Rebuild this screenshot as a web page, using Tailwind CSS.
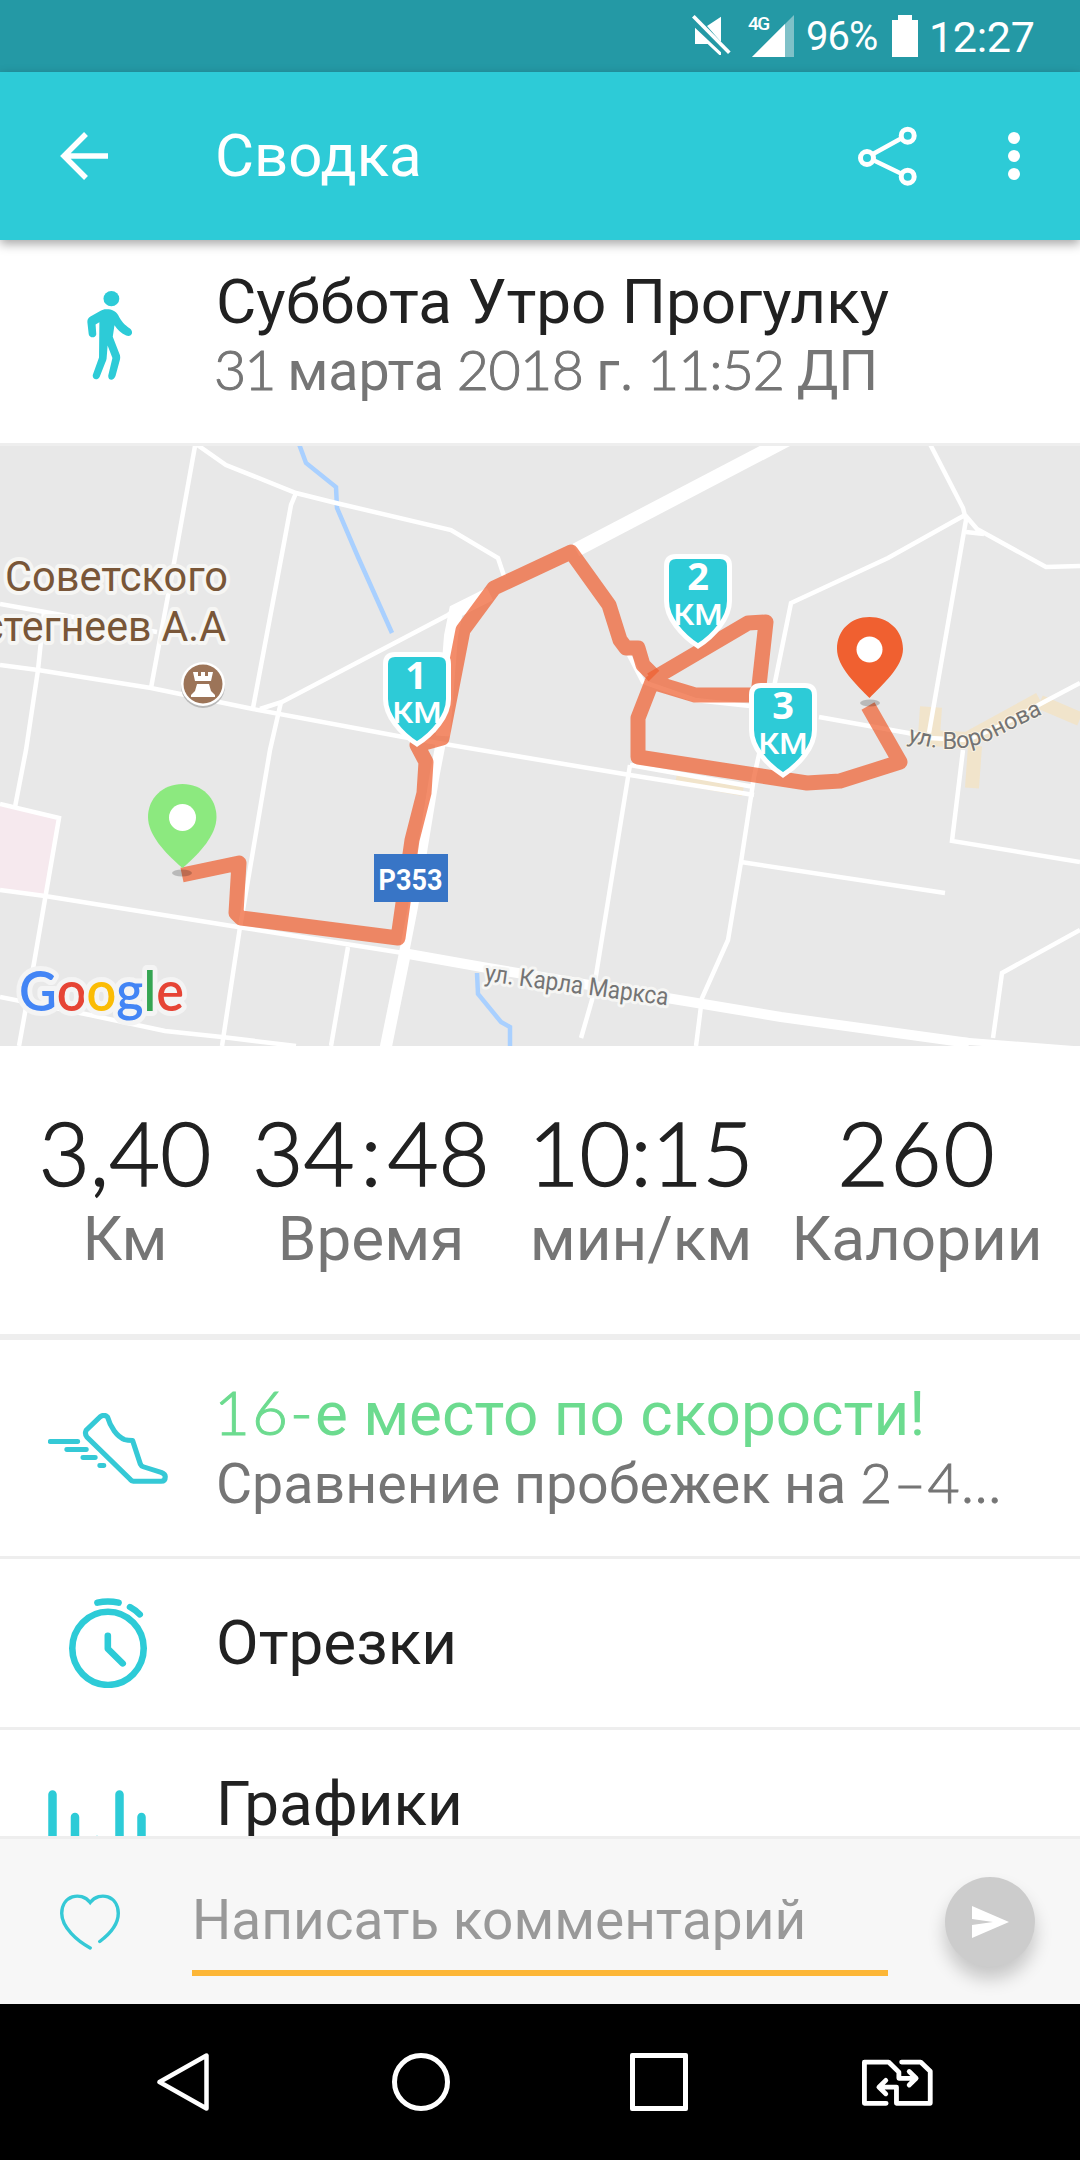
<!DOCTYPE html>
<html lang="ru">
<head>
    <meta charset="UTF-8">
    <meta name="viewport" content="width=device-width, initial-scale=1.0">
    <title>Сводка</title>
    <script src="https://cdn.jsdelivr.net/npm/@tailwindcss/browser@4"></script>
</head>
<body class="bg-white font-[Roboto,sans-serif] text-[#212121]">
    <div class="w-[1080px] h-[2160px] flex flex-col overflow-hidden">
        <!-- Status bar -->
        <div class="h-[72px] shrink-0 bg-[#2499a5] text-white flex items-start pl-[692px]">
            <svg class="mt-[15px] w-[39px] h-10" viewBox="96 45 117 120" preserveAspectRatio="none">
                <path d="M141 78L183 50V126ZM105 83L183 157V165H178L143 132H105Z" fill="#fff"/>
                <path d="M100 49L208 158" stroke="#fff" stroke-width="11"/>
            </svg>
            <div class="relative ml-[21px] mt-[15px] w-[42px] h-[42px]">
                <svg class="w-[42px] h-[42px]" viewBox="0 0 42 42">
                    <path d="M0 42L42 0V42Z" fill="#7fc1c8"/>
                    <path d="M0 42L33 9V42Z" fill="#fff"/>
                </svg>
                <span class="absolute -left-1 -top-[1px] text-[19px] leading-5 font-medium tracking-[-1.5px]">4G</span>
            </div>
            <span class="ml-[12px] mt-[13px] w-[76px] text-[40px] leading-[48px] tracking-[-1px]">96%</span>
            <svg class="ml-[10px] mt-[15px] w-[26px] h-[42px]" viewBox="0 0 26 42">
                <path d="M6 0H20V5H26V42H0V5H6Z" fill="#fff"/>
            </svg>
            <span class="ml-[11px] mt-[13px] text-[43px] leading-[48px] tracking-[-0.3px]">12:27</span>
        </div>

        <!-- App bar -->
        <div class="relative z-10 h-[168px] shrink-0 bg-[#2dcbd7] text-white flex items-center pl-[60px] pr-[60px] shadow-[0_4px_10px_rgba(0,0,0,0.35)]">
            <svg class="w-12 h-12" viewBox="0 0 48 48" fill="none" stroke="#fff" stroke-width="5.5">
                <path d="M48 24H4M26 2L4 24L26 46"/>
            </svg>
            <h1 class="ml-[107px] text-[60px] leading-[72px]">Сводка</h1>
            <svg class="ml-auto w-[60px] h-[60px]" viewBox="0 0 60 60" fill="none" stroke="#fff">
                <path d="M15 28L44 12M15 34L44 48" stroke-width="4.5"/>
                <circle cx="9" cy="32" r="6.5" stroke-width="5"/>
                <circle cx="49.700" cy="9.700" r="6.500" stroke-width="5"/>
                <circle cx="49.700" cy="50.700" r="6.500" stroke-width="5"/>
            </svg>
            <svg class="ml-[90px] w-3 h-12" viewBox="0 0 12 48" fill="#fff">
                <circle cx="6" cy="6" r="6"/>
                <circle cx="6" cy="24" r="6"/>
                <circle cx="6" cy="42" r="6"/>
            </svg>
        </div>

        <!-- Activity header -->
        <div class="h-[206px] shrink-0 flex border-b-[3px] border-[#eeeeee]">
            <div class="w-[216px] pl-[87px] pt-[51px]">
                <svg class="w-[45px] h-[89px]" viewBox="252 692 131 268" preserveAspectRatio="none" fill="#2dcbd7">
                    <circle cx="323" cy="715" r="23"/>
                    <path d="M303 747C320 745 335 750 343 765C352 784 362 794 377 805C391 818 379 832 366 826C350 818 340 808 332 795L327 830L346 880Q350 888 348 898L335 948C330 964 312 962 314 946L326 894L312 856L309 896Q308 902 305 908L289 950C282 964 266 958 269 944L287 892L288 786L277 793L279 822C278 834 260 835 257 822L253 785Q253 774 262 769L293 751Z"/>
                </svg>
            </div>
            <div class="pt-[26px]">
                <h2 class="text-[62px] leading-[71px] whitespace-nowrap">Суббота Утро Прогулку</h2>
                <p class="text-[55.500px] leading-[70px] whitespace-nowrap text-[#757575] [word-spacing:-1px]"><span class="-ml-[2px] font-[Lato] font-light leading-none tracking-[-2px] [-webkit-text-stroke:1px_#757575]">31</span> марта <span class="font-[Lato] font-light leading-none tracking-[-0.5px] [-webkit-text-stroke:1px_#757575]">2018</span> г. <span class="font-[Lato] font-light leading-none tracking-[-1px] [-webkit-text-stroke:1px_#757575]">11:52</span> ДП</p>
            </div>
        </div>

        <!-- Map -->
        <svg class="w-[1080px] h-[600px] shrink-0 bg-[#e8e8e8]" viewBox="0 0 1080 600" fill="none">
            <path d="M0 360L58 373L45 449L0 442Z" fill="#f6e9ee"/>
            <g stroke="#f1e4cb">
                <path d="M931 261L929 290" stroke-width="22"/>
                <path d="M929 292L967 294L1040 254" stroke-width="16"/>
                <path d="M1040 256L1080 273" stroke-width="14"/>
                <path d="M975 300L972 342" stroke-width="14"/>
                <path d="M676 333L743 345" stroke-width="10"/>
            </g>
            <g stroke="#a9d0ff" stroke-width="4.500">
                <path d="M299 -2L306 17L336 41L337 62L358 111L392 187"/>
                <path d="M477 527L478 548L501 576L510 581V600"/>
            </g>
            <!-- Roads -->
            <g stroke="#fff" stroke-width="4.500">
                <path d="M195 0L174 117L151 242"/>
                <path d="M196 -2L226 19L296 47L336 57L451 84L498 112L504 130"/>
                <path d="M296 47L291 59L284 97L253 262"/>
                <path d="M0 158L45 166L157 186"/>
                <path d="M0 219L38 224L151 242L253 263L403 291L540 314L630 329L754 349"/>
                <path d="M44 166L38 224L26 304L15 361"/>
                <path d="M260 263L282 256L448 169L482 147"/>
                <path d="M281 256L270 304L243 464L240 481L222 600"/>
                <path d="M0 444L45 450L238 481L403 507"/>
                <path d="M0 358L59 372L34 517L19 600"/>
                <path d="M0 551L90 569L165 585L222 591L296 600"/>
                <path d="M348 501L331 600"/>
                <path d="M930 -2L963 62L966 74L929 287"/>
                <path d="M965 69L888 112L791 157L774 241L754 331L741 416L728 494L702 552L696 600"/>
                <path d="M965 69L977 83L1046 121L1080 120M966 86L984 88"/>
                <path d="M819 271L908 287L929 292L967 294L1000 280L1044 256L1080 237"/>
                <path d="M629 209L643 236L695 254L750 260"/>
                <path d="M630 319L592 554L581 592M630 319L754 341"/>
                <path d="M741 416L945 447"/>
                <path d="M963 304L952 395L1080 416"/>
                <path d="M1080 484L1002 527L993 592"/>
                <path d="M404 507L413 461L424 394L435 327L441 296" stroke-width="10"/>
                <path d="M443 290L451 190L456 165L490 148" stroke-width="14"/>
                <path d="M384 610L405 507" stroke-width="12"/>
                <path d="M576 104L794 -10" stroke-width="14"/>
                <path d="M403 507L482 521L667 552L781 571L969 597" stroke-width="10"/>
                <path d="M950 594L1080 604" stroke-width="7"/>
            </g>
            <!-- Map labels -->
            <g font-family="Roboto" paint-order="stroke" stroke="#f6f6f4" stroke-width="8" stroke-linejoin="round">
                <text x="5" y="145" font-size="43" fill="#795638" textLength="223" lengthAdjust="spacingAndGlyphs">Советского</text>
                <text x="-18" y="195" font-size="43" fill="#795638" textLength="244" lengthAdjust="spacingAndGlyphs">стегнеев А.А</text>
                <text transform="translate(484 535) rotate(7.600)" font-size="25" fill="#747474" stroke-width="6" textLength="185" lengthAdjust="spacingAndGlyphs">ул. Карла Маркса</text>
                <path id="voronova" d="M907 295C930 303 962 308 992 293S1030 274 1060 260" stroke="none"/>
                <text font-size="23.500" fill="#747474" stroke-width="2" stroke="#faf3e6"><textPath href="#voronova">ул. Воронова</textPath></text>
            </g>
            <g>
                <circle cx="203" cy="240" r="22" fill="#b9b9b9"/>
                <circle cx="203" cy="238" r="22" fill="#fff"/>
                <circle cx="203" cy="238" r="19.500" fill="#9c7458"/>
                <path d="M193 226H198V230H201V226H205V230H208V226H213L211 235H195ZM197 238H209L211 245L215 249V251H191V249L195 245Z" fill="#fff"/>
            </g>
            <!-- Track -->
            <g stroke="#ee6030" stroke-opacity="0.72" stroke-width="15" stroke-linejoin="round">
                <path d="M182 429L239 417L236 467L241 472L398 492L412 394L424 347L426 316L417 299L442 292L463 184L494 142L571 106L609 159L620 194L626 202H638L643 219L654 230"/>
                <path d="M651 234L748 177L766 176L758 249H695L652 236L638 272V311L807 337L840 335L900 316L868 260"/>
            </g>
            <path d="M374 408H448V456H374Z" fill="#3875c6"/>
            <text x="378.500" y="443.500" font-family="Roboto" font-weight="700" font-size="30" fill="#fff" textLength="64" lengthAdjust="spacingAndGlyphs">P353</text>
            <!-- Pins -->
            <ellipse cx="182" cy="427" rx="10" ry="3.500" fill="#000" fill-opacity="0.2"/>
            <path d="M182.500 422C165 407 148 389 148 371C148 352 163 338 182.500 338C202 338 216.500 352 216.500 371C216.500 389 200 407 182.500 422Z" fill="#8ce97f"/>
            <circle cx="182.500" cy="371.500" r="13.500" fill="#fff"/>
            <ellipse cx="870" cy="257" rx="10" ry="3.500" fill="#000" fill-opacity="0.2"/>
            <path d="M869.500 252C857 239 837 221 837 203C837 184 851 171 869.500 171C888 171 903 184 903 203C903 221 882 239 869.500 252Z" fill="#f06030"/>
            <circle cx="869.500" cy="203.500" r="13" fill="#fff"/>
            <!-- Kilometre badges -->
            <g fill="#fff" text-anchor="middle" font-family="Roboto" font-size="29">
                <g transform="translate(383 206)">
                    <path d="M12 2.500H56Q65.500 2.500 65.500 12V47C65.500 64 50 82 34 92C18 82 2.500 64 2.500 47V12Q2.500 2.500 12 2.500Z" fill="#2dcbd7" stroke="#fff" stroke-width="5"/>
                    <text x="33" y="37" font-family="Open Sans" font-weight="700" font-size="38">1</text>
                    <text x="34" y="71" font-weight="500" textLength="49" lengthAdjust="spacingAndGlyphs">КМ</text>
                </g>
                <g transform="translate(664 108)">
                    <path d="M12 2.500H56Q65.500 2.500 65.500 12V47C65.500 64 50 82 34 92C18 82 2.500 64 2.500 47V12Q2.500 2.500 12 2.500Z" fill="#2dcbd7" stroke="#fff" stroke-width="5"/>
                    <text x="34" y="36" font-family="Open Sans" font-weight="700" font-size="38">2</text>
                    <text x="34" y="71" font-weight="500" textLength="49" lengthAdjust="spacingAndGlyphs">КМ</text>
                </g>
                <g transform="translate(749 237)">
                    <path d="M12 2.500H56Q65.500 2.500 65.500 12V47C65.500 64 50 82 34 92C18 82 2.500 64 2.500 47V12Q2.500 2.500 12 2.500Z" fill="#2dcbd7" stroke="#fff" stroke-width="5"/>
                    <text x="34" y="36" font-family="Open Sans" font-weight="700" font-size="38">3</text>
                    <text x="34" y="71" font-weight="500" textLength="49" lengthAdjust="spacingAndGlyphs">КМ</text>
                </g>
            </g>
            <text x="19" y="565" font-family="Lato" font-weight="600" font-size="55" textLength="165" lengthAdjust="spacingAndGlyphs" paint-order="stroke" stroke="#f4f4f4" stroke-width="10" stroke-linejoin="round"><tspan fill="#4385f5">G</tspan><tspan fill="#e64435">o</tspan><tspan fill="#fbbc05">o</tspan><tspan fill="#4385f5">g</tspan><tspan fill="#35a552">l</tspan><tspan fill="#e64435">e</tspan></text>
        </svg>

        <!-- Stats -->
        <div class="h-[294px] shrink-0 flex pt-[53px] border-b-[6px] border-[#eeeeee] text-center whitespace-nowrap">
            <div class="w-[250px]">
                <div class="font-[Lato] font-light text-[88px] leading-[106px] [-webkit-text-stroke:1.5px_#212121]">3,40</div>
                <div class="text-[62px] leading-[68px] text-[#757575]">Км</div>
            </div>
            <div class="w-[242px]">
                <div class="font-[Lato] font-light text-[88px] leading-[106px] [-webkit-text-stroke:1.5px_#212121]">34<span class="px-[6px]">:</span>48</div>
                <div class="text-[62px] leading-[68px] text-[#757575]">Время</div>
            </div>
            <div class="w-[298px]">
                <div class="font-[Lato] font-light text-[88px] leading-[106px] [-webkit-text-stroke:1.5px_#212121]">10:15</div>
                <div class="text-[62px] leading-[68px] text-[#757575]">мин/км</div>
            </div>
            <div class="w-[254px]">
                <div class="font-[Lato] font-light text-[88px] leading-[106px] tracking-[2px] [-webkit-text-stroke:1.5px_#212121]">260</div>
                <div class="text-[62px] leading-[68px] text-[#757575]">Калории</div>
            </div>
        </div>

        <!-- Pace ranking -->
        <div class="h-[219px] shrink-0 flex border-b-[3px] border-[#eeeeee]">
            <div class="w-[216px] pl-12 pt-[73px]">
                <svg class="w-[120px] h-[71px]" viewBox="139 158 349 214" preserveAspectRatio="none" fill="none" stroke="#35c9d6" stroke-width="15" stroke-linecap="round" stroke-linejoin="round">
                    <path d="M146 244H225M194 268H250M241 292H276M290 316H301"/>
                    <path d="M250 210L290 170Q302 160 312 170C320 200 340 230 362 238Q370 240 385 241L408 313Q410 318 416 320L468 337Q480 342 480 350Q480 364 468 364H388Q382 363 378 358L252 230Q245 220 250 210Z"/>
                </svg>
            </div>
            <div class="pt-[38px] whitespace-nowrap">
                <h3 class="text-[62px] leading-[72px] text-[#6cdb8f]"><span class="-ml-[2px] font-[Lato] font-light leading-none tracking-[2px] [-webkit-text-stroke:1px_#6cdb8f]">16-</span>е место по скорости!</h3>
                <p class="text-[55.500px] leading-[69px] text-[#757575]">Сравнение пробежек на <span class="font-[Lato] font-light leading-none tracking-[1.5px] [-webkit-text-stroke:1px_#757575]">2–4…</span></p>
            </div>
        </div>

        <!-- Splits -->
        <div class="h-[171px] shrink-0 flex items-center border-b-[3px] border-[#eeeeee]">
            <div class="w-[216px] pl-[69px]">
                <svg class="w-[78px] h-[90px]" viewBox="200 716 225 268" preserveAspectRatio="none" fill="none" stroke="#2dcbd7" stroke-width="19" stroke-linecap="round" stroke-linejoin="round">
                    <ellipse cx="312.500" cy="866" rx="103" ry="109"/>
                    <path d="M312 828V867L355 911M282 730Q312 723 343 730M376 743Q392 752 404 765"/>
                </svg>
            </div>
            <h3 class="text-[62px] leading-[72px]">Отрезки</h3>
        </div>

        <!-- Graphs -->
        <div class="h-[106px] shrink-0 flex overflow-hidden">
            <div class="w-[216px] pl-12 pt-[60px]">
                <svg class="w-[98px] h-[90px]" viewBox="0 0 98 90" fill="none" stroke="#2dcbd7" stroke-width="8.500" stroke-linecap="round">
                    <path d="M4.500 4.500V85M27 27V85M49 50V85M71.500 4.500V85M93.500 27V85"/>
                </svg>
            </div>
            <h3 class="pt-[38px] text-[62px] leading-[72px]">Графики</h3>
        </div>

        <!-- Comment bar -->
        <div class="h-[168px] shrink-0 flex bg-[#f7f7f7] border-t-[3px] border-[#eeeeee] pl-[60px]">
            <svg class="mt-[55px] w-[60px] h-[56px]" viewBox="174 523 175 165" preserveAspectRatio="none" fill="none" stroke="#35c9d6" stroke-width="10" stroke-linecap="round">
                <path d="M262 682C225 662 179 622 179 580C179 529 234 513 262 548C290 513 344 529 344 580C344 612 318 642 290 663"/>
            </svg>
            <div class="ml-[72px] mt-[39px] w-[696px] h-[98px] border-b-[6px] border-[#fcb637] text-[55px] leading-[84px] text-[#999999]">Написать комментарий</div>
            <div class="ml-[57px] mt-[38px] w-[90px] h-[90px] rounded-full bg-[#cccccc] flex items-center justify-center shadow-[0_12px_18px_rgba(0,0,0,0.2)]">
                <svg class="w-[37px] h-8" viewBox="0 0 37 32"><path d="M0 0L37 16L0 32V19L21 16L0 13Z" fill="#fff"/></svg>
            </div>
        </div>

        <!-- Navigation bar -->
        <div class="h-[156px] shrink-0 bg-black flex items-center pl-[157px]">
            <svg class="w-[52px] h-[58px]" viewBox="0 0 52 58" fill="none" stroke="#fff" stroke-width="4.500" stroke-linejoin="round"><path d="M49.500 2.500V55.500L2.500 29Z"/></svg>
            <div class="ml-[183px] w-[58px] h-[58px] rounded-full border-[5px] border-white"></div>
            <div class="ml-[180px] w-[58px] h-[58px] rounded-[2px] border-[5px] border-white"></div>
            <svg class="ml-[174px] w-[71px] h-[47px]" viewBox="934 716 206 139" preserveAspectRatio="none" fill="none" stroke="#fff" stroke-width="14" stroke-linecap="round" stroke-linejoin="round">
                <path d="M1004 847H941V725H1011L1041 755V773H1090M1071 753L1091 773L1071 793"/>
                <path d="M1049 725H1104L1132 752V847H1034V799H984M1003 779L983 799L1003 819"/>
            </svg>
        </div>
    </div>
</body>
</html>
